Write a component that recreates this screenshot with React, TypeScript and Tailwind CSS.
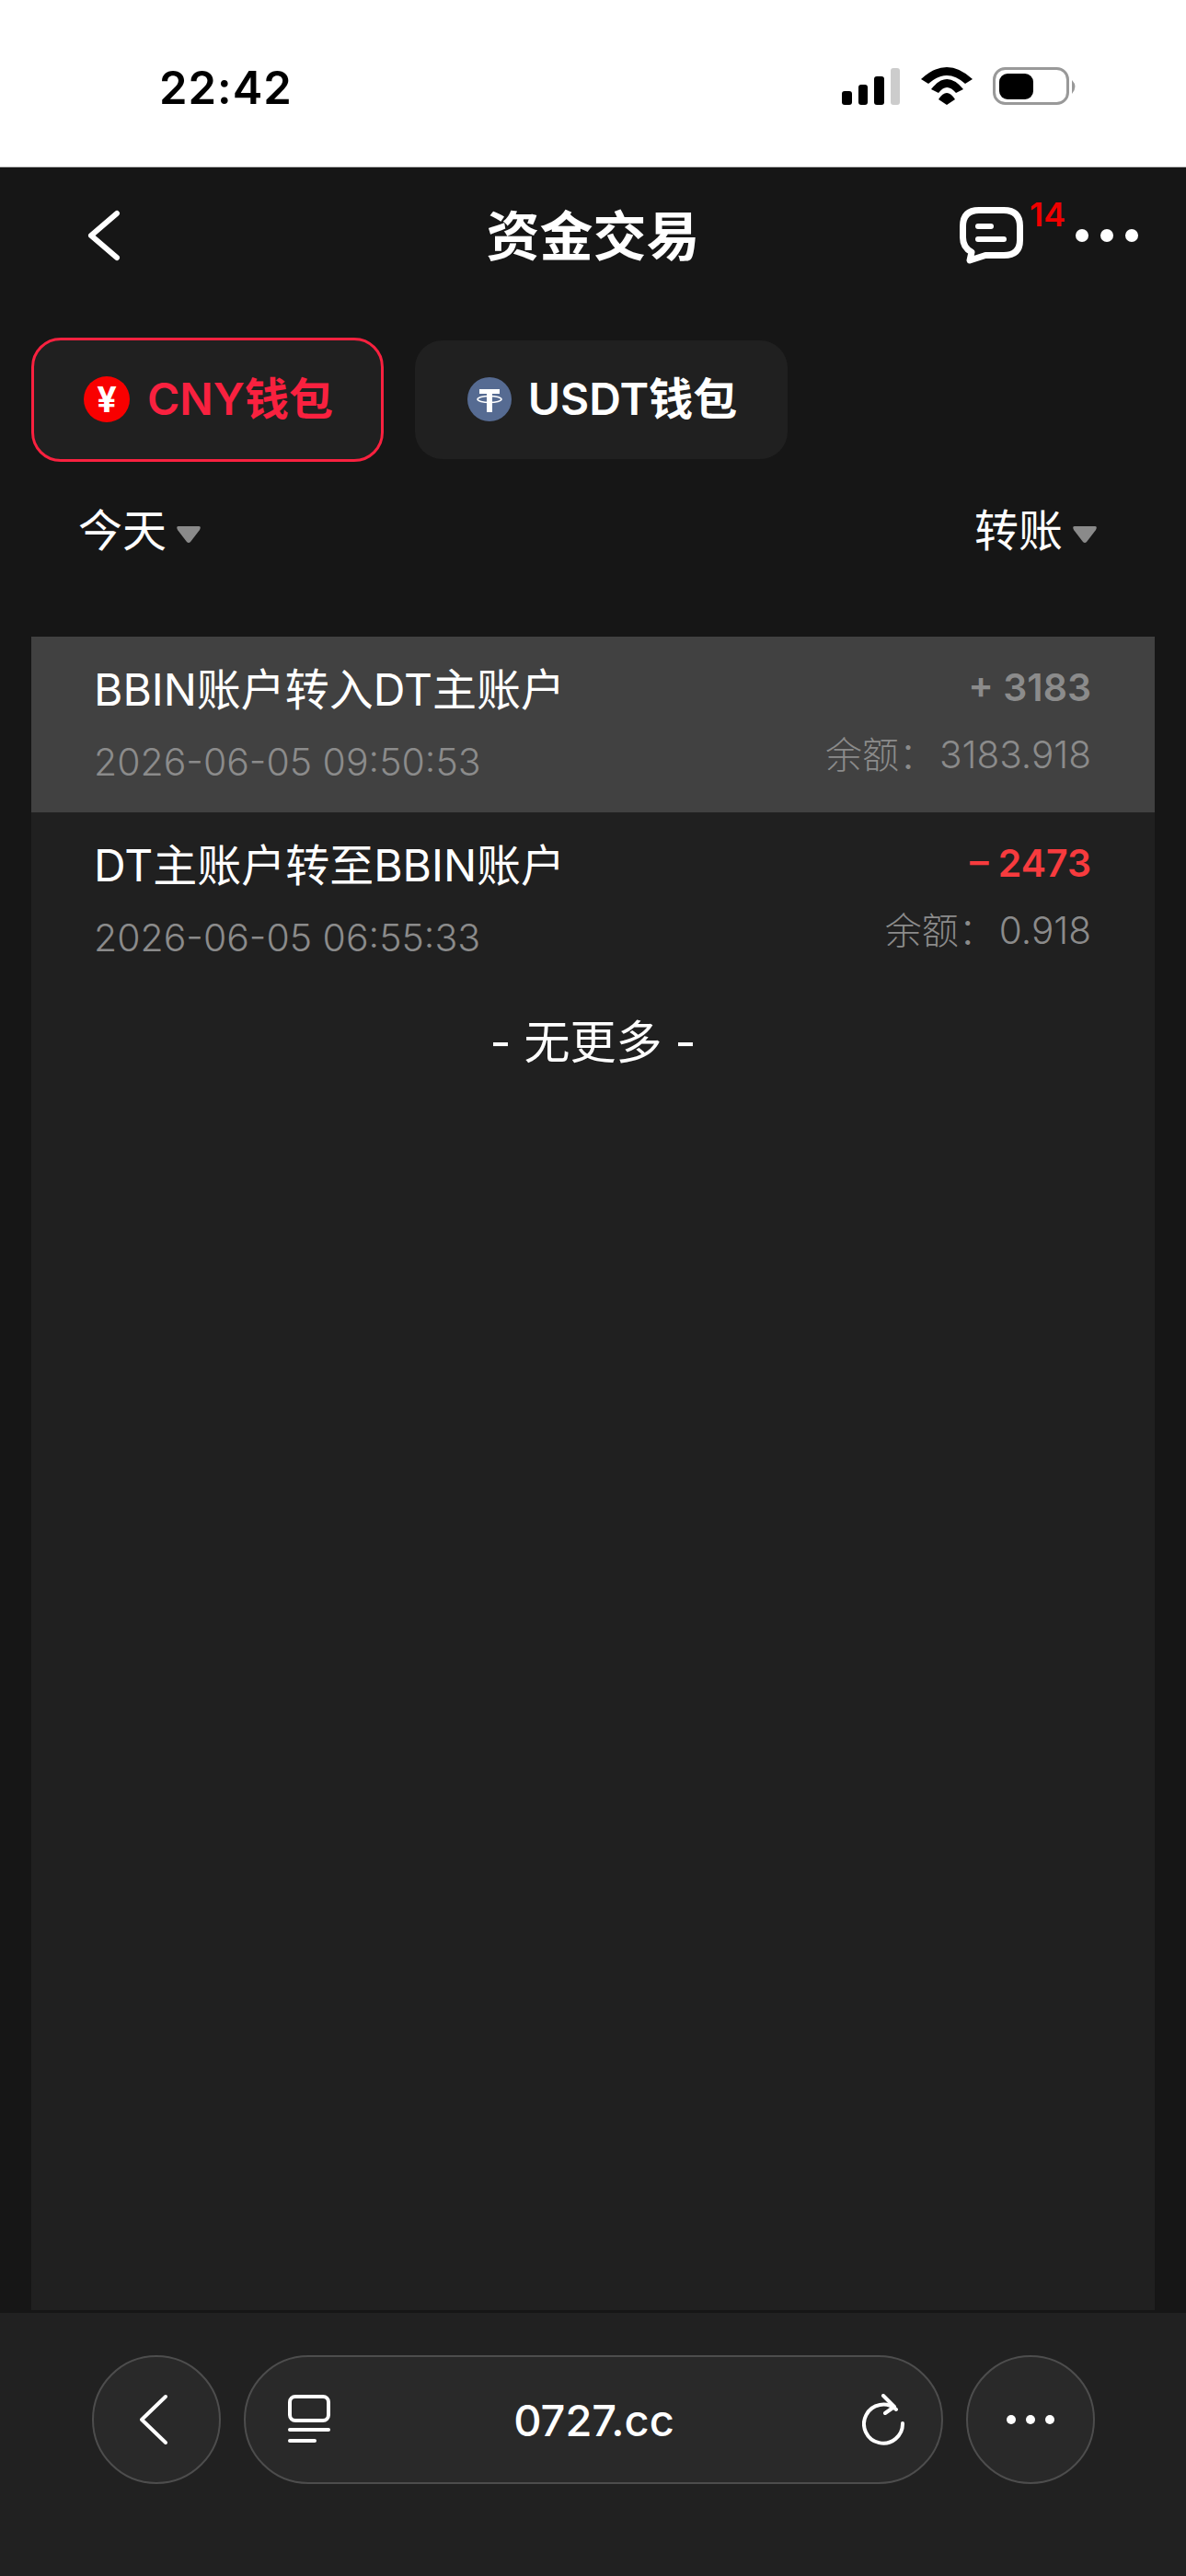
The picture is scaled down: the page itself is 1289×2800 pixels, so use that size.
const sans = "font-['Inter','Noto_Sans_CJK_SC',sans-serif]";

function StatusIcons() {
  return (
    <svg width="262" height="44" viewBox="0 0 262 44">
      <rect x="0" y="26" width="11" height="15" rx="3" fill="#000" />
      <rect x="18" y="19" width="10" height="22" rx="3" fill="#000" />
      <rect x="35" y="10" width="11" height="31" rx="3" fill="#000" />
      <rect x="53" y="1" width="10" height="40" rx="3" fill="#ccc" />
      <path d="M86 13 Q114 -13 142 13 L134 18 Q114 0 94 18 Z" fill="#000" />
      <path d="M97 24 Q114 2 132 24 L124 28 Q114 16 105 28 Z" fill="#000" />
      <path d="M105 35 Q114 21 123 35 L114 41 Z" fill="#000" />
      <rect x="165.500" y="1.500" width="80" height="38" rx="12" fill="none" stroke="#999" strokeWidth="3" />
      <rect x="171" y="7" width="37" height="28" rx="9" fill="#000" />
      <path d="M250 14 Q257 21 250 29 Z" fill="#999" />
    </svg>
  );
}

function ChatIcon() {
  return (
    <svg width="69" height="62" viewBox="0 0 69 62" fill="none">
      <path
        d="M21 3.500 H48 Q65.500 3.500 65.500 21 V36 Q65.500 52.500 48 52.500 H28 L11 58 L13 49 Q3.500 44 3.500 33 V21 Q3.500 3.500 21 3.500 Z"
        stroke="#fff"
        strokeWidth="7"
        strokeLinejoin="round"
      />
      <rect x="17" y="18" width="20" height="6" rx="3" fill="#fff" />
      <rect x="17" y="32" width="34" height="6" rx="3" fill="#fff" />
    </svg>
  );
}

function Chevron({ width, height, stroke }: { width: number; height: number; stroke: number }) {
  const s = stroke / 2 + 1;
  return (
    <svg width={width} height={height} viewBox={`0 0 ${width} ${height}`} fill="none">
      <path
        d={`M${width - s} ${s} L${s} ${height / 2} L${width - s} ${height - s}`}
        stroke="#fff"
        strokeWidth={stroke}
        strokeLinecap="round"
        strokeLinejoin="round"
      />
    </svg>
  );
}

function Dots({ size, gap }: { size: string; gap: string }) {
  return (
    <div className={`flex items-center ${gap}`}>
      <span className={`${size} rounded-full bg-white`} />
      <span className={`${size} rounded-full bg-white`} />
      <span className={`${size} rounded-full bg-white`} />
    </div>
  );
}

function TetherIcon() {
  return (
    <svg width="48" height="48" viewBox="0 0 48 48">
      <circle cx="24" cy="24" r="24" fill="#566b92" />
      <path d="M13 13 H35 V18 H27 V38 H21 V18 H13 Z" fill="#fff" />
      <ellipse cx="24" cy="24" rx="13" ry="3.500" fill="none" stroke="#fff" strokeWidth="1.500" />
    </svg>
  );
}

function Caret() {
  return (
    <svg width="28" height="20" viewBox="0 0 28 20">
      <path d="M3 1 H25 Q28 1 26 5 L16 18 Q14 20 12 18 L2 5 Q0 1 3 1 Z" fill="#8a8a8a" />
    </svg>
  );
}

const rows = [
  {
    title: "BBIN账户转入DT主账户",
    time: "2026-06-05 09:50:53",
    amount: "+ 3183",
    balance: "3183.918",
    active: true,
  },
  {
    title: "DT主账户转至BBIN账户",
    time: "2026-06-05 06:55:33",
    amount: "– 2473",
    balance: "0.918",
    active: false,
  },
];

export default function App() {
  return (
    <div className={`flex h-[2800px] w-[1289px] flex-col bg-[#161616] ${sans}`}>
      <div className="flex h-[182px] shrink-0 items-start justify-between border-b border-[#bbb] bg-white pl-[173px] pr-[112px] pt-[74px]">
        <span className="text-[49px] font-semibold leading-[44px] tracking-[1px] text-black">22:42</span>
        <div className="-mt-[1px]">
          <StatusIcons />
        </div>
      </div>

      <div className="relative flex h-[151px] shrink-0 items-center justify-between pb-[4px] pl-[95px] pr-[52px]">
        <Chevron width={36} height={56} stroke={6} />
        <h1 className="absolute left-0 right-0 mt-[2px] text-center text-[58px] font-semibold leading-none text-white">资金交易</h1>
        <div className="flex items-center gap-[57px]">
          <div className="relative">
            <ChatIcon />
            <span className="absolute -top-[10px] left-[76px] text-[36px] font-semibold leading-none text-[#f00000]">14</span>
          </div>
          <Dots size="h-[14px] w-[14px]" gap="gap-[13px]" />
        </div>
      </div>

      <div className="flex shrink-0 items-center gap-[34px] pl-[34px] pt-[34px]">
        <button className="flex h-[135px] w-[383px] items-center justify-center gap-[19px] rounded-[32px] border-[3px] border-[#f9213f] bg-[#202020] pb-[2px] pl-[2px] text-[48px] font-semibold text-[#f9213f]">
          <span className="flex h-[50px] w-[50px] items-center justify-center rounded-full bg-[#f90000] text-[38px] font-bold leading-none text-white">¥</span>
          CNY钱包
        </button>
        <button className="flex h-[129px] w-[405px] items-center justify-center gap-[18px] rounded-[30px] bg-[#202020] pb-[2px] pl-[2px] text-[48px] font-semibold text-white">
          <TetherIcon />
          USDT钱包
        </button>
      </div>

      <div className="flex h-[190px] shrink-0 items-start justify-between pl-[85px] pr-[96px] pt-[44px]">
        <div className="flex items-center gap-[10px] text-[48px] leading-[62px] text-white">
          今天
          <span className="mt-[8px]"><Caret /></span>
        </div>
        <div className="flex items-center gap-[10px] text-[48px] leading-[62px] text-white">
          转账
          <span className="mt-[8px]"><Caret /></span>
        </div>
      </div>

      <div className="mx-[34px] flex-1 bg-[#202020]">
        {rows.map((r) => (
          <div
            key={r.time}
            className={`flex h-[191px] items-start justify-between pl-[68px] pr-[69px] pt-[27px] ${r.active ? "bg-[#414141]" : ""}`}
          >
            <div>
              <div className="text-[48px] font-normal leading-[62px] text-white">{r.title}</div>
              <div className="mt-[17px] text-[41px] font-light leading-[60px] text-[#8b8b8b]">{r.time}</div>
            </div>
            <div className="-mt-[1px] text-right">
              <div className={`text-[41px] font-semibold leading-[58px] ${r.active ? "text-[#8b8b8b]" : "text-[#f73b3e]"}`}>{r.amount}</div>
              <div className="mt-[15px] flex items-baseline justify-end gap-[4px] font-light leading-[60px] text-[#8b8b8b]">
                <span className="text-[40px]">余额：</span>
                <span className="text-[40.500px]">{r.balance}</span>
              </div>
            </div>
          </div>
        ))}
        <div className="pt-[27px] text-center text-[50px] font-normal leading-[64px] text-white">- 无更多 -</div>
      </div>

      <div className="mt-[2px] flex h-[287px] shrink-0 items-start gap-[25px] border-t border-[#161616] bg-[#212121] pl-[100px] pt-[46px]">
        <div className="flex h-[140px] w-[140px] items-center justify-center rounded-full border-[2px] border-[#4d4d4d] bg-[#292929] pr-[6px]">
          <Chevron width={32} height={56} stroke={4} />
        </div>
        <div className="flex h-[140px] w-[760px] items-center justify-between rounded-full border-[2px] border-[#4d4d4d] bg-[#292929] pl-[46px] pr-[38px]">
          <svg width="46" height="54" viewBox="0 0 46 54" fill="none">
            <rect x="2" y="2" width="42" height="26" rx="6" stroke="#fff" strokeWidth="4" />
            <rect x="0" y="36" width="46" height="4" rx="2" fill="#fff" />
            <rect x="0" y="48" width="31" height="4" rx="2" fill="#fff" />
          </svg>
          <span className="-ml-[5px] text-[47px] font-medium leading-none text-white">0727.cc</span>
          <svg width="48" height="56" viewBox="0 0 48 56" fill="none" stroke="#fff" strokeWidth="4" strokeLinecap="round" strokeLinejoin="round">
            <path d="M37 17 A21 21 0 1 0 44 32" />
            <path d="M23 2 L35 14 L25 21" />
          </svg>
        </div>
        <div className="flex h-[140px] w-[140px] items-center justify-center rounded-full border-[2px] border-[#4d4d4d] bg-[#292929]">
          <Dots size="h-[10px] w-[10px]" gap="gap-[11px]" />
        </div>
      </div>
    </div>
  );
}
